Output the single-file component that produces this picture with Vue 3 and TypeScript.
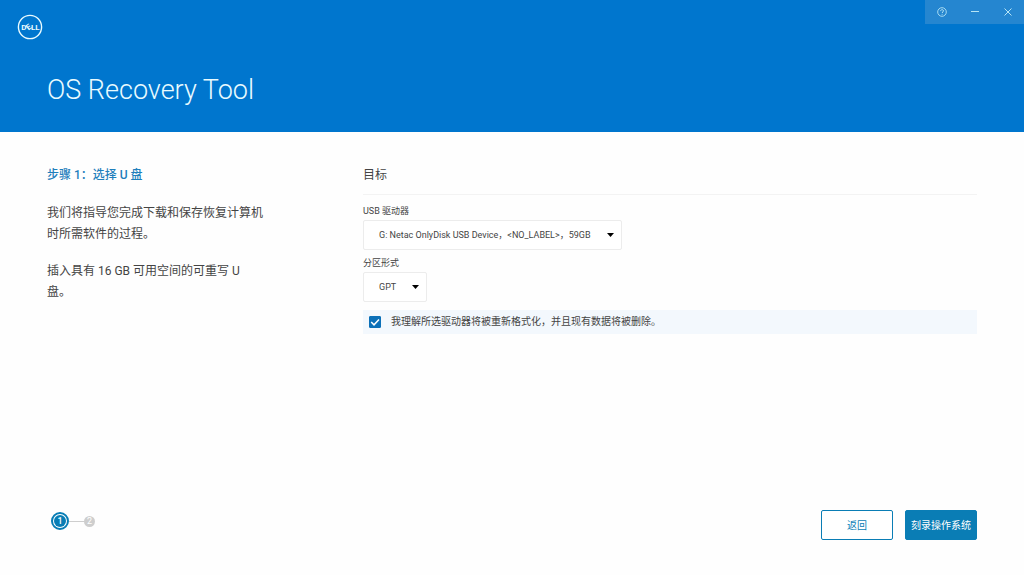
<script setup lang="ts">
import { ref } from 'vue'

const drives = ['G: Netac OnlyDisk USB Device，<NO_LABEL>，59GB']
const schemes = ['GPT', 'MBR']
const drive = ref(drives[0])
const scheme = ref('GPT')
const accepted = ref(true)
</script>

<template>
  <div class="window">
    <header class="banner">
      <div class="bar">
        <svg class="logo" viewBox="0 0 26 26" role="img" aria-label="Dell">
          <circle cx="13" cy="13" r="11.6" fill="none" stroke="currentColor" stroke-width="1.4" />
          <g fill="currentColor" font-family="Roboto, sans-serif" font-size="8" font-weight="700" text-anchor="middle">
            <text x="6.8" y="15.8">D</text>
            <text x="11.6" y="15.8" transform="rotate(-38 11.6 13)">E</text>
            <text x="16.2" y="15.8">L</text>
            <text x="20.4" y="15.8">L</text>
          </g>
        </svg>
        <div class="controls">
          <button type="button" aria-label="帮助">
            <svg viewBox="0 0 10 10" fill="none" stroke="currentColor">
              <circle cx="5" cy="5" r="4.3" stroke-width="0.9" />
              <path d="M3.6 4.1C3.6 2.2 6.5 2.2 6.5 3.9C6.5 4.8 5.1 4.9 5.1 6M5.1 6.9V7.7" stroke-width="1" />
            </svg>
          </button>
          <button type="button" aria-label="最小化">
            <svg viewBox="0 0 10 10" fill="none" stroke="currentColor"><path d="M1 4.5H9" /></svg>
          </button>
          <button type="button" aria-label="关闭">
            <svg viewBox="0 0 10 10" fill="none" stroke="currentColor"><path d="M1.5 1.5L8.5 8.5M8.5 1.5L1.5 8.5" /></svg>
          </button>
        </div>
      </div>
      <h1>OS Recovery Tool</h1>
    </header>

    <main class="content">
      <section class="guide">
        <h2>步骤 1：选择 U 盘</h2>
        <p>我们将指导您完成下载和保存恢复计算机时所需软件的过程。</p>
        <p>插入具有 16 GB 可用空间的可重写 U 盘。</p>
      </section>

      <section class="target">
        <h2>目标</h2>
        <label class="caption" for="drive">USB 驱动器</label>
        <div class="picker drive">
          <select id="drive" v-model="drive">
            <option v-for="item in drives" :key="item">{{ item }}</option>
          </select>
          <svg class="caret" viewBox="0 0 7 4" aria-hidden="true"><path d="M0 0H7L3.5 4Z" /></svg>
        </div>
        <label class="caption" for="scheme">分区形式</label>
        <div class="picker scheme">
          <select id="scheme" v-model="scheme">
            <option v-for="item in schemes" :key="item">{{ item }}</option>
          </select>
          <svg class="caret" viewBox="0 0 7 4" aria-hidden="true"><path d="M0 0H7L3.5 4Z" /></svg>
        </div>
        <label class="consent">
          <span class="tick">
            <input v-model="accepted" type="checkbox" />
            <svg v-if="accepted" viewBox="0 0 12 12" aria-hidden="true"><path d="M2.2 6L5 8.8L10 3.4" /></svg>
          </span>
          我理解所选驱动器将被重新格式化，并且现有数据将被删除。
        </label>
      </section>
    </main>

    <footer class="footer">
      <ol class="steps">
        <li class="current" aria-current="step"><span>1</span></li>
        <li>2</li>
      </ol>
      <div class="actions">
        <button type="button">返回</button>
        <button type="button" class="primary">刻录操作系统</button>
      </div>
    </footer>
  </div>
</template>

<style>
body {
  background: #fefefe;
}
</style>

<style scoped>
.window {
  display: flex;
  flex-direction: column;
  min-height: 100vh;
  color: #444;
  font: 12px/21px Roboto, "Noto Sans CJK SC", sans-serif;
}
h1, h2, p, ol {
  margin: 0;
  padding: 0;
  font-weight: 400;
}
button {
  padding: 0;
  font: inherit;
  cursor: pointer;
}
.banner {
  padding-bottom: 24px;
  background: #0076ce;
  color: #e9fbff;
}
.bar {
  display: flex;
  justify-content: space-between;
  align-items: flex-start;
}
.logo {
  width: 26px;
  height: 26px;
  margin: 14px 0 0 17px;
}
.controls {
  display: flex;
  background: #2586d0;
}
.controls button {
  display: grid;
  place-items: center;
  width: 33px;
  height: 24px;
  border: 0;
  background: none;
  color: #b5e4f5;
}
.controls svg {
  width: 10px;
  height: 10px;
}
h1 {
  margin: 32px 47px 0;
  font-size: 27px;
  font-weight: 300;
  line-height: 36px;
}
.content {
  flex: 1;
  display: grid;
  grid-template-columns: 316px 1fr;
  padding: 33px 47px 0;
}
.guide {
  width: 220px;
}
.guide h2 {
  color: #1f7fbc;
  font-size: 12px;
  font-weight: 500;
  line-height: 21px;
}
.guide p {
  margin-top: 16px;
}
.guide p:first-of-type {
  margin-top: 17px;
}
.guide p:last-of-type {
  width: 200px;
}
.target {
  font-size: 9px;
}
.target h2 {
  margin-bottom: 8px;
  padding-bottom: 8px;
  border-bottom: 1px solid #f3f3f3;
  font-size: 12px;
  line-height: 21px;
}
.caption {
  display: block;
  width: max-content;
  margin-bottom: 1px;
  line-height: 16px;
}
.picker {
  position: relative;
  max-width: 100%;
  margin-bottom: 5px;
}
.drive {
  width: 259px;
}
.scheme {
  width: 64px;
}
select {
  display: block;
  width: 100%;
  height: 30px;
  padding: 0 15px;
  border: 1px solid #ececec;
  border-radius: 2px;
  appearance: none;
  background: #fff;
  color: #444;
  font: inherit;
}
.caret {
  position: absolute;
  top: 13px;
  right: 8px;
  width: 7px;
  height: 4px;
  pointer-events: none;
}
.consent {
  display: flex;
  align-items: center;
  gap: 10px;
  margin-top: 8px;
  padding-left: 6px;
  background: #f3f8fd;
  font-size: 10px;
  line-height: 24px;
}
.tick {
  position: relative;
  width: 12px;
  height: 12px;
}
.tick input {
  display: block;
  width: 12px;
  height: 12px;
  margin: 0;
  border: 1px solid #0b70b8;
  border-radius: 1px;
  appearance: none;
}
.tick input:checked {
  background: #0b70b8;
}
.tick svg {
  position: absolute;
  inset: 0;
  fill: none;
  stroke: #fff;
  stroke-width: 1.5;
  pointer-events: none;
}
.footer {
  display: flex;
  justify-content: space-between;
  align-items: flex-start;
  padding: 0 47px 35px 51px;
}
.steps {
  display: flex;
  align-items: center;
  height: 22px;
  list-style: none;
}
.steps li {
  display: grid;
  place-items: center;
  width: 11px;
  height: 11px;
  border-radius: 50%;
  background: #cecece;
  color: #fff;
  font-size: 9px;
  line-height: 11px;
}
.steps .current {
  width: 14px;
  height: 14px;
  border: 2px solid #087db5;
  background: #fff;
}
.steps .current span {
  width: 12px;
  height: 12px;
  border-radius: 50%;
  background: #087db5;
  font-weight: 500;
  line-height: 12px;
  text-align: center;
}
.steps .current + li {
  position: relative;
  margin-left: 15px;
}
.steps .current + li::before {
  content: "";
  position: absolute;
  right: 11px;
  width: 15px;
  height: 1px;
  background: #cecece;
}
.actions {
  display: flex;
  gap: 12px;
}
.actions button {
  width: 72px;
  height: 30px;
  border: 1px solid #0a7db5;
  border-radius: 2px;
  background: #fff;
  color: #0a7db5;
  font-size: 10px;
}
.actions .primary {
  background: #0a7db5;
  color: #fff;
}
</style>
